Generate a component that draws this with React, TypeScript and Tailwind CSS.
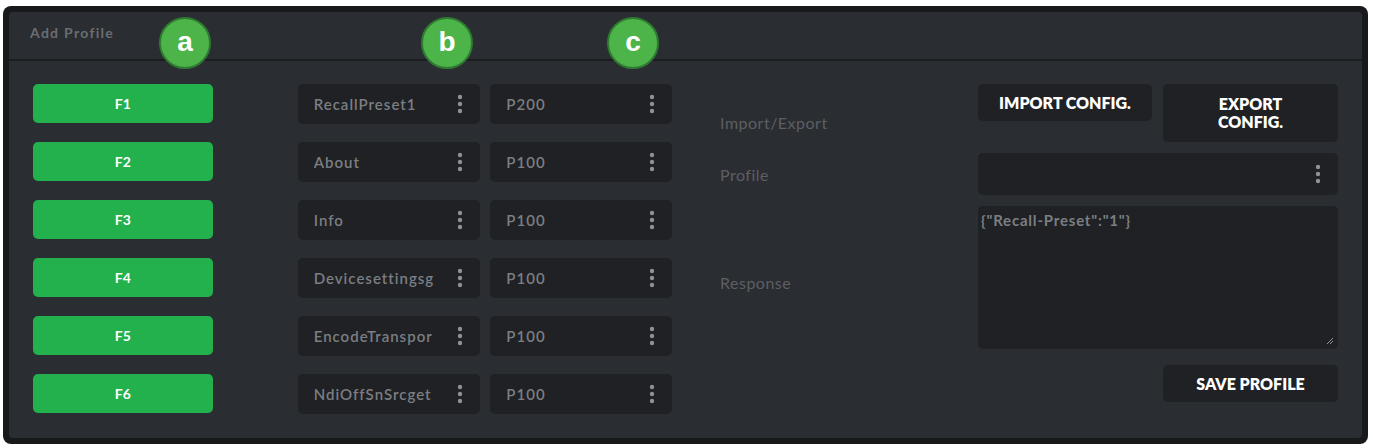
import React from 'react';

const font = { fontFamily: 'Lato, "Open Sans", Arial, sans-serif' };

const commands = ['RecallPreset1', 'About', 'Info', 'Devicesettingsg', 'EncodeTranspor', 'NdiOffSnSrcget'];
const profiles = ['P200', 'P100', 'P100', 'P100', 'P100', 'P100'];

function Dots() {
  return (
    <svg width="6" height="20" viewBox="0 0 6 20" className="shrink-0">
      <circle cx="3" cy="3" r="2.2" fill="#8e9195" />
      <circle cx="3" cy="10" r="2.2" fill="#8e9195" />
      <circle cx="3" cy="17" r="2.2" fill="#8e9195" />
    </svg>
  );
}

function Select({ value }: { value: string }) {
  return (
    <div className="h-[40px] rounded-[5px] bg-[#1f2124] flex items-center justify-between pl-[16px] pr-[17px] gap-[6px]">
      <span className="text-[15px] tracking-[1px] font-semibold text-[#7b7e82] whitespace-nowrap overflow-hidden">{value}</span>
      <Dots />
    </div>
  );
}

function Badge({ letter, left }: { letter: string; left: string }) {
  return (
    <div
      className={`absolute top-[17px] ${left} w-[52px] h-[52px] rounded-full bg-[#4db449] border-2 border-[#2f7a31] flex items-center justify-center`}
    >
      <span className="text-white text-[28px] font-bold leading-none pb-[3px]" style={{ fontFamily: '"Liberation Sans", Arial, sans-serif' }}>
        {letter}
      </span>
    </div>
  );
}

function App() {
  return (
    <div className="w-full h-[448px] bg-white pt-[6px] pl-[3px] pr-[5px] relative" style={font}>
      <div className="h-[438px] bg-[#17191b] rounded-lg p-[6px]">
        <div className="h-full bg-[#2a2d31] rounded-[4px] flex flex-col">
          {/* Header */}
          <div className="h-[49px] border-b-2 border-[#1c1e21] flex items-center pl-[21px] pb-[6px] shrink-0">
            <span className="text-[14px] tracking-[1.3px] font-bold text-[#6a6d71]">Add Profile</span>
          </div>

          {/* Body */}
          <div className="flex pt-[23px] pl-[24px] pr-[24px]">
            <div className="w-[180px] flex flex-col gap-[19px]">
              {['F1', 'F2', 'F3', 'F4', 'F5', 'F6'].map((f) => (
                <button
                  key={f}
                  className="h-[39px] rounded-[5px] bg-[#22b14c] text-white text-[14px] font-bold"
                >
                  {f}
                </button>
              ))}
            </div>

            <div className="w-[183px] ml-[85px] flex flex-col gap-[18px]">
              {commands.map((c, i) => (
                <Select key={i} value={c} />
              ))}
            </div>

            <div className="w-[182px] ml-[10px] flex flex-col gap-[18px]">
              {profiles.map((p, i) => (
                <Select key={i} value={p} />
              ))}
            </div>

            <div className="ml-[48px] flex-1 flex">
              <div className="w-[258px] flex flex-col text-[16px] tracking-[0.5px] text-[#5c5f63]">
                <div className="h-[58px] pt-[27px]">Import/Export</div>
                <div className="h-[42px] mt-[11px] flex items-center pt-[2px]">Profile</div>
                <div className="h-[143px] mt-[11px] flex items-center pt-[10px]">Response</div>
              </div>

              <div className="w-[360px] ml-auto flex flex-col">
                <div className="flex gap-[11px] items-start">
                  <button className="w-[174px] h-[37px] rounded-[5px] bg-[#1f2124] text-white text-[16px] font-extrabold">
                    IMPORT CONFIG.
                  </button>
                  <button className="w-[175px] h-[58px] rounded-[5px] bg-[#1f2124] text-white text-[16px] font-extrabold leading-[18px]">
                    EXPORT
                    <br />
                    CONFIG.
                  </button>
                </div>
                <div className="h-[42px] mt-[11px] rounded-[5px] bg-[#1f2124] flex items-center justify-end pr-[17px]">
                  <Dots />
                </div>
                <div className="h-[143px] mt-[11px] rounded-[5px] bg-[#1f2124] relative pl-[3px] pt-[2px]">
                  <span className="text-[15px] tracking-[0.8px] font-bold text-[#7b7e82]">{'{"Recall-Preset":"1"}'}</span>
                  <svg width="9" height="9" viewBox="0 0 9 9" className="absolute right-[4px] bottom-[4px]">
                    <path d="M8 2 L2 8 M8 5 L5 8" stroke="#8e9195" strokeWidth="1" />
                  </svg>
                </div>
                <button className="self-end w-[175px] h-[37px] mt-[16px] rounded-[5px] bg-[#1f2124] text-white text-[16px] font-extrabold">
                  SAVE PROFILE
                </button>
              </div>
            </div>
          </div>
        </div>
      </div>

      <Badge letter="a" left="left-[159px]" />
      <Badge letter="b" left="left-[421px]" />
      <Badge letter="c" left="left-[607px]" />
    </div>
  );
}

export default App;
